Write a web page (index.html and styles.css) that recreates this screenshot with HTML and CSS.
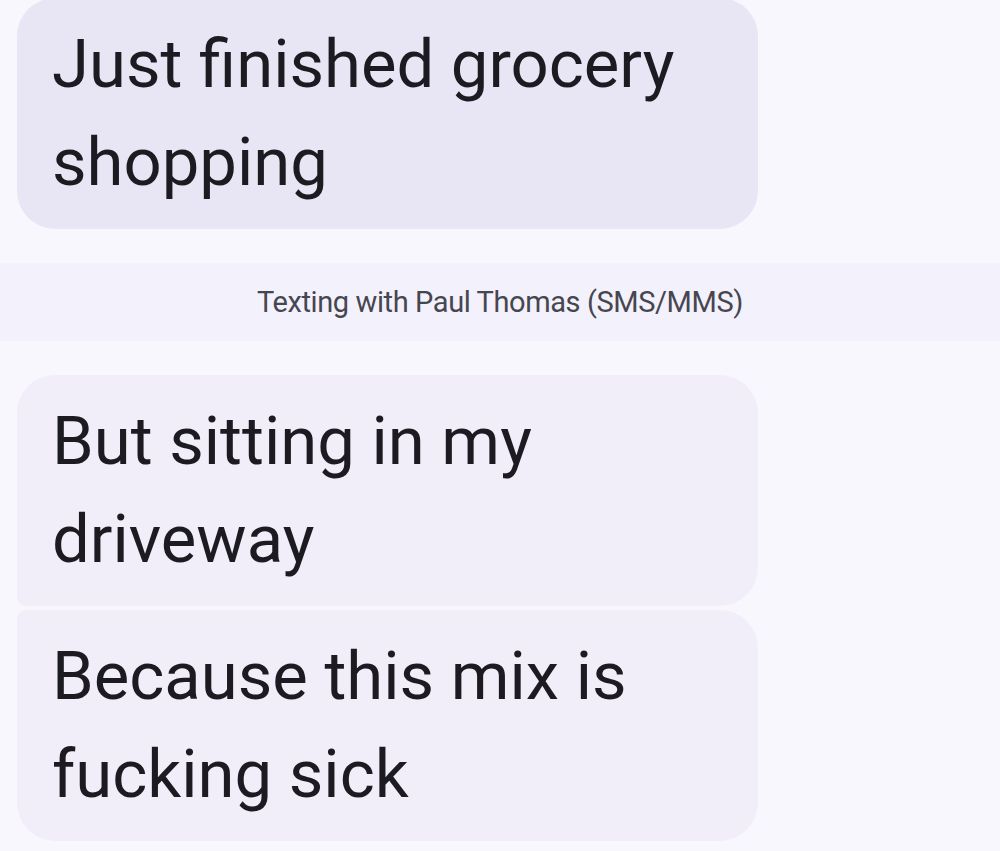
FILE: index.html
```html
<!DOCTYPE html>
<html lang="en">

<head>
    <meta charset="utf-8">
    <title>Messages</title>
    <link rel="stylesheet" href="styles.css">
</head>

<body>
    <div class="thread">
        <div class="msg single">Just finished grocery shopping</div>

        <div class="banner">Texting with Paul Thomas (SMS/MMS)</div>

        <div class="group">
            <div class="msg first">But sitting in my driveway</div>
            <div class="msg last">Because this mix is fucking sick</div>
        </div>
    </div>
</body>

</html>
```

FILE: styles.css
```css
html {
    background-color: #f8f7fd;
}

body {
    margin: 0;
    font-family: Roboto, 'Noto Sans', sans-serif;
    color: #1c1b22;
}

.thread {
    display: flex;
    flex-direction: column;
    margin-top: -2px;
}

.msg {
    box-sizing: border-box;
    width: 741px;
    margin-left: 17px;
    padding: 17px 35px 18px 35px;
    font-size: 67px;
    line-height: 98px;
    border-radius: 38px;
    background: #f1eefa;
}

.single {
    background: #e8e6f4;
}

.group {
    display: flex;
    flex-direction: column;
    gap: 4px;
}

.first {
    border-bottom-left-radius: 9px;
}

.last {
    border-top-left-radius: 9px;
}

.banner {
    margin: 34px 0;
    height: 78px;
    background: #f3f1fc;
    color: #46464f;
    font-size: 29px;
    letter-spacing: -0.4px;
    line-height: 78px;
    text-align: center;
}
```
